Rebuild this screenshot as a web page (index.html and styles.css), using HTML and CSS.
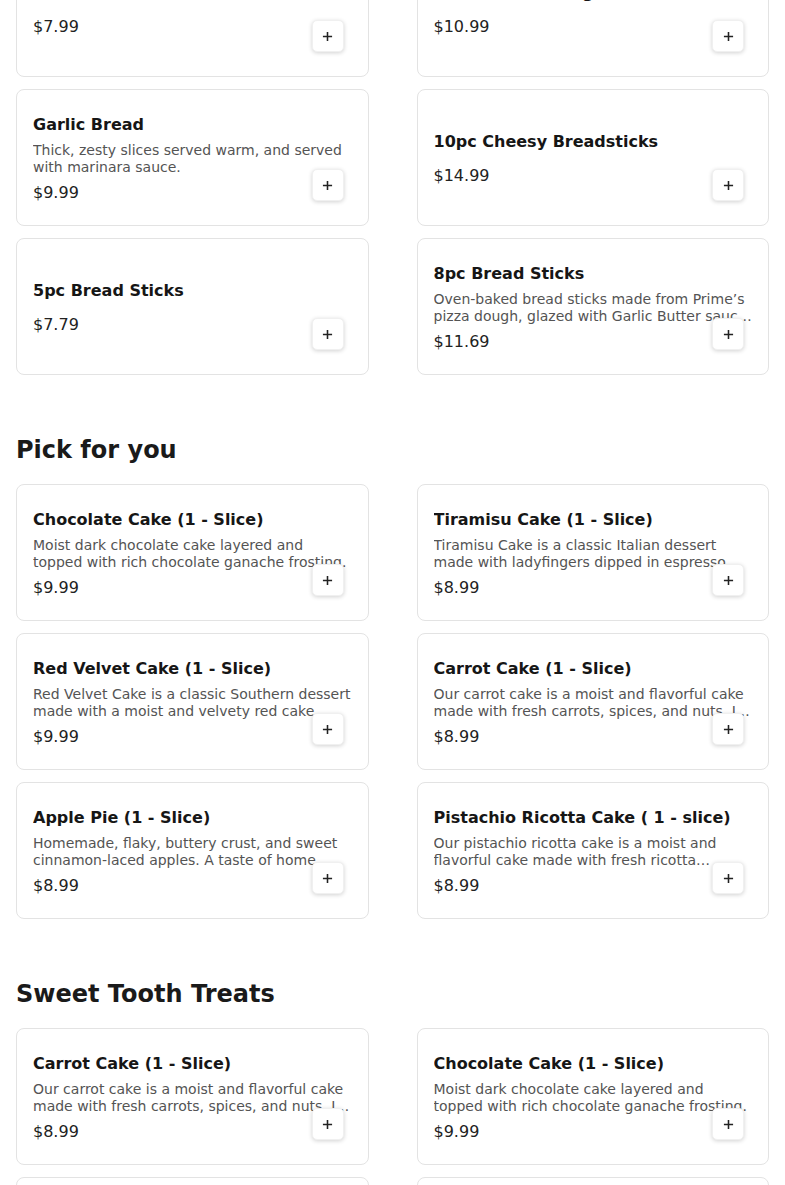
FILE: index.html
```html
<!DOCTYPE html>
<html lang="en">
<head>
<meta charset="utf-8">
<title>Menu</title>
<link rel="stylesheet" href="styles.css">
</head>
<body>
<main class="menu">
  <section class="section section-first">
    <div class="grid">
      <div class="card">
        <div class="card-title">Cheese Bread</div>
        <div class="card-desc"></div>
        <div class="card-price">$7.99</div>
        <button class="add-btn" aria-label="Add"><svg viewBox="0 0 12 12" width="11" height="11"><path d="M6 1v10M1 6h10" stroke="#222" stroke-width="1.7" fill="none"/></svg></button>
      </div>
      <div class="card">
        <div class="card-title">12 Boneless Wings</div>
        <div class="card-desc"></div>
        <div class="card-price">$10.99</div>
        <button class="add-btn" aria-label="Add"><svg viewBox="0 0 12 12" width="11" height="11"><path d="M6 1v10M1 6h10" stroke="#222" stroke-width="1.7" fill="none"/></svg></button>
      </div>
      <div class="card">
        <div class="card-title">Garlic Bread</div>
        <div class="card-desc">Thick, zesty slices served warm, and served with marinara sauce.</div>
        <div class="card-price">$9.99</div>
        <button class="add-btn" aria-label="Add"><svg viewBox="0 0 12 12" width="11" height="11"><path d="M6 1v10M1 6h10" stroke="#222" stroke-width="1.7" fill="none"/></svg></button>
      </div>
      <div class="card">
        <div class="card-title">10pc Cheesy Breadsticks</div>
        <div class="card-desc"></div>
        <div class="card-price">$14.99</div>
        <button class="add-btn" aria-label="Add"><svg viewBox="0 0 12 12" width="11" height="11"><path d="M6 1v10M1 6h10" stroke="#222" stroke-width="1.7" fill="none"/></svg></button>
      </div>
      <div class="card">
        <div class="card-title">5pc Bread Sticks</div>
        <div class="card-desc"></div>
        <div class="card-price">$7.79</div>
        <button class="add-btn" aria-label="Add"><svg viewBox="0 0 12 12" width="11" height="11"><path d="M6 1v10M1 6h10" stroke="#222" stroke-width="1.7" fill="none"/></svg></button>
      </div>
      <div class="card">
        <div class="card-title">8pc Bread Sticks</div>
        <div class="card-desc">Oven-baked bread sticks made from Prime’s pizza dough, glazed with Garlic Butter sauce and sprinkled with parmesan.</div>
        <div class="card-price">$11.69</div>
        <button class="add-btn" aria-label="Add"><svg viewBox="0 0 12 12" width="11" height="11"><path d="M6 1v10M1 6h10" stroke="#222" stroke-width="1.7" fill="none"/></svg></button>
      </div>
    </div>
  </section>

  <section class="section">
    <h2 class="section-title">Pick for you</h2>
    <div class="grid">
      <div class="card">
        <div class="card-title">Chocolate Cake (1 - Slice)</div>
        <div class="card-desc">Moist dark chocolate cake layered and topped with rich chocolate ganache frosting.</div>
        <div class="card-price">$9.99</div>
        <button class="add-btn" aria-label="Add"><svg viewBox="0 0 12 12" width="11" height="11"><path d="M6 1v10M1 6h10" stroke="#222" stroke-width="1.7" fill="none"/></svg></button>
      </div>
      <div class="card">
        <div class="card-title">Tiramisu Cake (1 - Slice)</div>
        <div class="card-desc">Tiramisu Cake is a classic Italian dessert made with ladyfingers dipped in espresso and layered with mascarpone.</div>
        <div class="card-price">$8.99</div>
        <button class="add-btn" aria-label="Add"><svg viewBox="0 0 12 12" width="11" height="11"><path d="M6 1v10M1 6h10" stroke="#222" stroke-width="1.7" fill="none"/></svg></button>
      </div>
      <div class="card">
        <div class="card-title">Red Velvet Cake (1 - Slice)</div>
        <div class="card-desc">Red Velvet Cake is a classic Southern dessert made with a moist and velvety red cake layered with cream cheese frosting.</div>
        <div class="card-price">$9.99</div>
        <button class="add-btn" aria-label="Add"><svg viewBox="0 0 12 12" width="11" height="11"><path d="M6 1v10M1 6h10" stroke="#222" stroke-width="1.7" fill="none"/></svg></button>
      </div>
      <div class="card">
        <div class="card-title">Carrot Cake (1 - Slice)</div>
        <div class="card-desc">Our carrot cake is a moist and flavorful cake made with fresh carrots, spices, and nuts. It is topped with cream cheese frosting.</div>
        <div class="card-price">$8.99</div>
        <button class="add-btn" aria-label="Add"><svg viewBox="0 0 12 12" width="11" height="11"><path d="M6 1v10M1 6h10" stroke="#222" stroke-width="1.7" fill="none"/></svg></button>
      </div>
      <div class="card">
        <div class="card-title">Apple Pie (1 - Slice)</div>
        <div class="card-desc">Homemade, flaky, buttery crust, and sweet cinnamon-laced apples. A taste of home.</div>
        <div class="card-price">$8.99</div>
        <button class="add-btn" aria-label="Add"><svg viewBox="0 0 12 12" width="11" height="11"><path d="M6 1v10M1 6h10" stroke="#222" stroke-width="1.7" fill="none"/></svg></button>
      </div>
      <div class="card">
        <div class="card-title">Pistachio Ricotta Cake ( 1 - slice)</div>
        <div class="card-desc">Our pistachio ricotta cake is a moist and flavorful cake made with fresh ricotta imported from Italy and ground pistachios.</div>
        <div class="card-price">$8.99</div>
        <button class="add-btn" aria-label="Add"><svg viewBox="0 0 12 12" width="11" height="11"><path d="M6 1v10M1 6h10" stroke="#222" stroke-width="1.7" fill="none"/></svg></button>
      </div>
    </div>
  </section>

  <section class="section">
    <h2 class="section-title">Sweet Tooth Treats</h2>
    <div class="grid">
      <div class="card">
        <div class="card-title">Carrot Cake (1 - Slice)</div>
        <div class="card-desc">Our carrot cake is a moist and flavorful cake made with fresh carrots, spices, and nuts. It is topped with cream cheese frosting.</div>
        <div class="card-price">$8.99</div>
        <button class="add-btn" aria-label="Add"><svg viewBox="0 0 12 12" width="11" height="11"><path d="M6 1v10M1 6h10" stroke="#222" stroke-width="1.7" fill="none"/></svg></button>
      </div>
      <div class="card">
        <div class="card-title">Chocolate Cake (1 - Slice)</div>
        <div class="card-desc">Moist dark chocolate cake layered and topped with rich chocolate ganache frosting.</div>
        <div class="card-price">$9.99</div>
        <button class="add-btn" aria-label="Add"><svg viewBox="0 0 12 12" width="11" height="11"><path d="M6 1v10M1 6h10" stroke="#222" stroke-width="1.7" fill="none"/></svg></button>
      </div>
      <div class="card">
        <div class="card-title">Red Velvet Cake (1 - Slice)</div>
        <div class="card-desc">Red Velvet Cake is a classic Southern dessert made with a moist and velvety red cake layered with cream cheese frosting.</div>
        <div class="card-price">$9.99</div>
        <button class="add-btn" aria-label="Add"><svg viewBox="0 0 12 12" width="11" height="11"><path d="M6 1v10M1 6h10" stroke="#222" stroke-width="1.7" fill="none"/></svg></button>
      </div>
      <div class="card">
        <div class="card-title">Tiramisu Cake (1 - Slice)</div>
        <div class="card-desc">Tiramisu Cake is a classic Italian dessert made with ladyfingers dipped in espresso and layered with mascarpone.</div>
        <div class="card-price">$8.99</div>
        <button class="add-btn" aria-label="Add"><svg viewBox="0 0 12 12" width="11" height="11"><path d="M6 1v10M1 6h10" stroke="#222" stroke-width="1.7" fill="none"/></svg></button>
      </div>
    </div>
  </section>
</main>
</body>
</html>
```

FILE: styles.css
```css
* { box-sizing: border-box; }

html, body {
  margin: 0;
  padding: 0;
  background: #ffffff;
  overflow: hidden;
}

body {
  font-family: "DejaVu Sans", Verdana, sans-serif;
  color: #1a1a1a;
}

.menu {
  padding: 0 16px;
}

.section-first {
  margin-top: -60px;
}

.section-title {
  margin: 60px 0 19px;
  font-size: 24px;
  line-height: 30px;
  font-weight: 700;
  color: #1a1a1a;
}

.grid {
  display: grid;
  grid-template-columns: 1fr 1fr;
  column-gap: 48px;
  row-gap: 12px;
}

.card {
  position: relative;
  height: 137px;
  border: 1px solid #e3e3e3;
  border-radius: 8px;
  padding: 2px 16px 0;
  display: flex;
  flex-direction: column;
  justify-content: center;
  gap: 7px;
  background: #fff;
}

.card-title {
  font-size: 16px;
  line-height: 20px;
  font-weight: 700;
  color: #161616;
  white-space: nowrap;
  overflow: hidden;
}

.card-desc {
  font-size: 14px;
  line-height: 17px;
  color: #545454;
  display: -webkit-box;
  -webkit-line-clamp: 2;
  -webkit-box-orient: vertical;
  overflow: hidden;
}

.card-desc:empty {
  display: block;
}

.card-price {
  font-size: 16px;
  line-height: 20px;
  color: #222;
}

.add-btn {
  position: absolute;
  right: 24px;
  bottom: 24px;
  width: 32px;
  height: 32px;
  padding: 0;
  border: 1px solid #f0f0f0;
  border-radius: 5px;
  background: #fff;
  box-shadow: 0 1px 4px rgba(0, 0, 0, 0.18);
  display: flex;
  align-items: center;
  justify-content: center;
  cursor: pointer;
}

.add-btn svg {
  display: block;
}
```
